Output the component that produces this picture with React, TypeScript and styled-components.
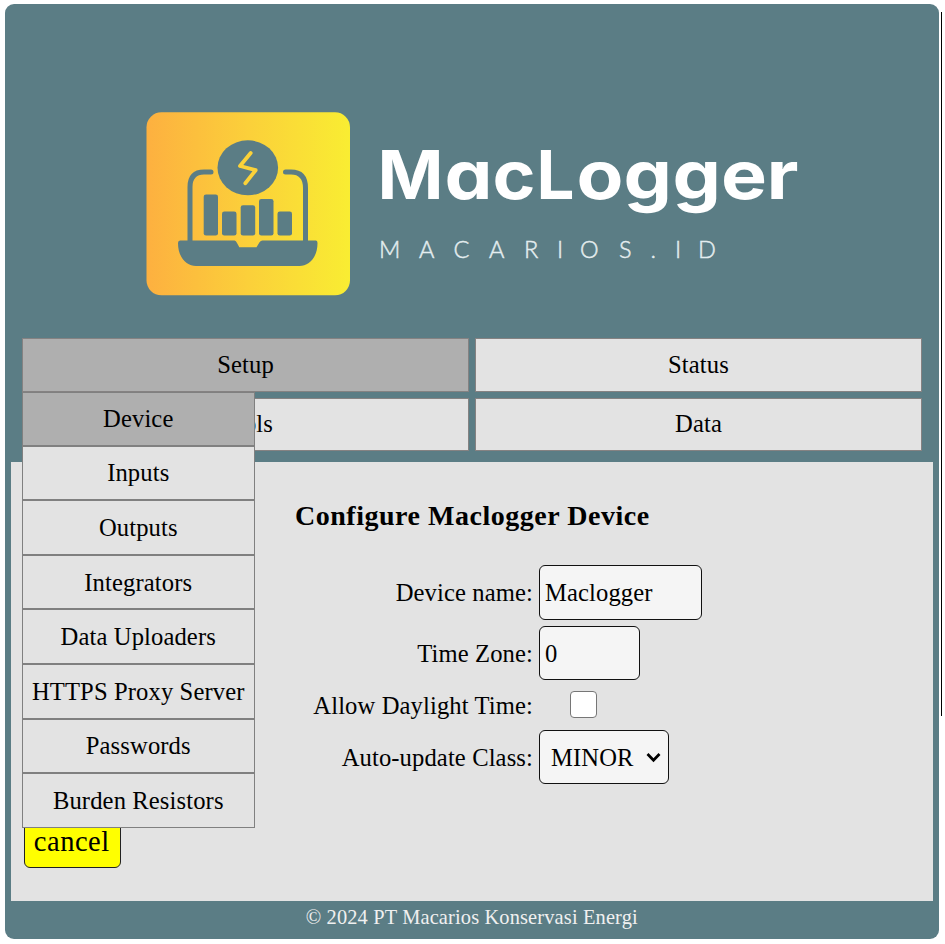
import React from "react";
import styled, { createGlobalStyle } from "styled-components";

const GlobalStyle = createGlobalStyle`
  *, *::before, *::after { box-sizing: border-box; }
  body {
    margin: 0;
    background: #fff;
    color: #000;
    font-family: "Liberation Serif", "Times New Roman", serif;
    font-size: 24.6px;
    letter-spacing: 0.12px;
    overflow: hidden;
  }
`;

const Page = styled.div`
  display: flex;
  align-items: flex-start;
  gap: 2px;
  height: 944px;
  padding: 4px 0 0 5px;
`;

const Frame = styled.div`
  display: flex;
  flex-direction: column;
  width: 934px;
  height: 934.5px;
  padding: 0 6.5px 0 6px;
  border-radius: 9px;
  background: #5b7d85;
`;

const ScrollEdge = styled.div`
  width: 1px;
  height: 704px;
  margin-top: 8px;
  background: #000;
`;

const Header = styled.header`
  flex: none;
  height: 334px;
`;

const Logo = styled.svg`
  display: block;
  width: 921px;
  height: 334px;
`;

const Wordmark = styled.text`
  font-family: Inter, sans-serif;
  font-size: 67.5px;
  font-weight: 750;
  font-feature-settings: "cv11";
  letter-spacing: 0;
  fill: #fff;
`;

const Domain = styled.text`
  font-family: Lato, sans-serif;
  font-size: 23.5px;
  font-weight: 300;
  letter-spacing: 0;
  fill: #e4edef;
  stroke: #e4edef;
  stroke-width: 0.45px;
`;

const Nav = styled.nav`
  flex: none;
  position: relative;
  display: grid;
  grid-template-columns: 447px 447px;
  grid-template-rows: 53.5px 53.5px;
  gap: 6px;
  height: 124px;
  padding-left: 11px;
`;

const NavItem = styled.div<{ $active?: boolean }>`
  display: flex;
  align-items: center;
  justify-content: center;
  border: 1px solid #858282;
  background: ${(p) => (p.$active ? "#afafaf" : "#e3e3e3")};
`;

const Menu = styled.ul`
  position: absolute;
  z-index: 1;
  top: 54px;
  left: 10.5px;
  display: grid;
  grid-template-rows: 53.6px repeat(7, 54.6px);
  width: 233.5px;
  margin: 0;
  padding: 0;
  list-style: none;
`;

const MenuItem = styled.li<{ $active?: boolean }>`
  display: flex;
  align-items: center;
  justify-content: center;
  padding-top: 1px;
  border: 1px solid #808080;
  background: ${(p) => (p.$active ? "#afafaf" : "#e3e3e3")};
  white-space: nowrap;
`;

const Content = styled.main`
  flex: none;
  display: flex;
  flex-direction: column;
  height: 439px;
  background: #e3e3e3;
`;

const Title = styled.h3`
  margin: 38px 0 0 284px;
  font-size: 28px;
  line-height: 32px;
  letter-spacing: 0.52px;
  white-space: nowrap;
`;

const Form = styled.form`
  display: grid;
  grid-template-columns: 522px auto;
  grid-template-rows: 54.5px 54px 38px 53.5px;
  row-gap: 6.3px;
  column-gap: 6px;
  align-items: center;
  justify-items: start;
  margin-top: 33px;
`;

const Label = styled.label`
  justify-self: end;
  padding-top: 2px;
  white-space: nowrap;
`;

const Field = styled.input<{ $width: number }>`
  width: ${(p) => p.$width}px;
  height: 100%;
  padding: 4px 5px 2px;
  border: 1.5px solid #111;
  border-radius: 6px;
  background: #f5f5f5;
  color: #000;
  font: inherit;
  letter-spacing: inherit;
`;

const Checkbox = styled.input`
  appearance: none;
  width: 27px;
  height: 27px;
  margin: 0 0 2px 31px;
  border: 1.5px solid #767676;
  border-radius: 4px;
  background: #fff;
`;

const Select = styled.button`
  display: flex;
  align-items: center;
  gap: 12px;
  width: 129.5px;
  height: 100%;
  padding: 1px 0 0 11px;
  border: 1.5px solid #111;
  border-radius: 6px;
  background: #f5f5f5;
  color: #000;
  font: inherit;
  letter-spacing: inherit;
`;

const Cancel = styled.button`
  width: 97.5px;
  height: 53px;
  margin: auto 0 33.5px 12.5px;
  padding: 1px 1px 0 0;
  border: 1.5px solid #222;
  border-radius: 6px;
  background: #ff0;
  color: #000;
  font: inherit;
  font-size: 28.5px;
  letter-spacing: 0.5px;
`;

const Footer = styled.footer`
  padding-top: 3.5px;
  color: #f0f0f0;
  font-size: 20.4px;
  line-height: 24px;
  letter-spacing: 0.15px;
  text-align: center;
`;

const menuItems = [
  "Device",
  "Inputs",
  "Outputs",
  "Integrators",
  "Data Uploaders",
  "HTTPS Proxy Server",
  "Passwords",
  "Burden Resistors",
];

// Letter, left edge and advance width of the wordmark.
const wordmark: [string, number, number][] = [
  ["M", 377.5, 66],
  ["a", 444.5, 48],
  ["c", 492.5, 43],
  ["L", 536.5, 38],
  ["o", 576.5, 47],
  ["g", 623.5, 48.5],
  ["g", 672.5, 48.5],
  ["e", 721, 46],
  ["r", 766.5, 32],
];

function Brand() {
  return (
    <Logo viewBox="11 4 921 334" role="img" aria-label="MacLogger">
      <defs>
        <linearGradient id="gold">
          <stop offset="0" stopColor="#fdb040" />
          <stop offset="0.5" stopColor="#fbd03a" />
          <stop offset="1" stopColor="#f9ed32" />
        </linearGradient>
      </defs>
      <rect x="146.5" y="112.3" width="203.5" height="183" rx="15" fill="url(#gold)" />
      <g fill="#5b7d85">
        <path
          d="M190 243V187Q190 172 204 172H211M285.500 172H291Q305.500 172 305.500 188V243"
          fill="none"
          stroke="#5b7d85"
          strokeWidth="5"
          strokeLinecap="round"
        />
        <ellipse cx="247.800" cy="167.800" rx="30.300" ry="27.500" />
        <rect x="203.700" y="194.500" width="14.300" height="41" rx="2.300" />
        <rect x="222" y="211.500" width="14.500" height="24" rx="2.300" />
        <rect x="240.700" y="205.300" width="14.500" height="30.200" rx="2.300" />
        <rect x="259" y="199" width="14.500" height="36.500" rx="2.300" />
        <rect x="277.500" y="211.500" width="14.500" height="24" rx="2.300" />
        <path d="M180 240.500H234.500Q236 240.500 237 243L239.300 247.300H256.500L259.500 242.200Q260.700 240.500 262.500 240.500H316Q317.500 240.500 317.500 243C317.500 258 308.500 266 299.500 266H196C187 266 178 258 178 243Q178 240.500 180 240.500Z" />
        <path
          d="M250.700 153.300L240 166.300L255.700 170.500L245.300 183.500"
          transform="translate(0 -0.300)"
          transform-origin="0 0"
          fill="none"
          stroke="#fbd239"
          strokeWidth="3.800"
          strokeLinecap="round"
          strokeLinejoin="round"
        />
      </g>
      <Wordmark y="198.5">
        {wordmark.map(([letter, x, width]) => (
          <tspan key={x} x={x} textLength={width} lengthAdjust="spacingAndGlyphs">
            {letter}
          </tspan>
        ))}
      </Wordmark>
      <Domain x="379 419 453.500 489 524 557 580 619 650.500 675 698" y="257.500">
        MACARIOS.ID
      </Domain>
    </Logo>
  );
}

export default function App() {
  return (
    <>
      <GlobalStyle />
      <Page>
        <Frame>
          <Header>
            <Brand />
          </Header>
          <Nav>
            <NavItem $active>Setup</NavItem>
            <NavItem>Status</NavItem>
            <NavItem>Tools</NavItem>
            <NavItem>Data</NavItem>
            <Menu>
              {menuItems.map((item, i) => (
                <MenuItem key={item} $active={i === 0}>
                  {item}
                </MenuItem>
              ))}
            </Menu>
          </Nav>
          <Content>
            <Title>Configure Maclogger Device</Title>
            <Form>
              <Label htmlFor="name">Device name:</Label>
              <Field id="name" $width={163} defaultValue="Maclogger" />
              <Label htmlFor="zone">Time Zone:</Label>
              <Field id="zone" $width={101} defaultValue="0" />
              <Label htmlFor="dst">Allow Daylight Time:</Label>
              <Checkbox id="dst" type="checkbox" />
              <Label htmlFor="update">Auto-update Class:</Label>
              <Select id="update" type="button">
                MINOR
                <svg width="15" height="11" viewBox="0 0 15 11">
                  <path d="M1.500 2L7.500 8.300L13.500 2" fill="none" stroke="#000" strokeWidth="2.700" />
                </svg>
              </Select>
            </Form>
            <Cancel type="button">cancel</Cancel>
          </Content>
          <Footer>© 2024 PT Macarios Konservasi Energi</Footer>
        </Frame>
        <ScrollEdge />
      </Page>
    </>
  );
}
